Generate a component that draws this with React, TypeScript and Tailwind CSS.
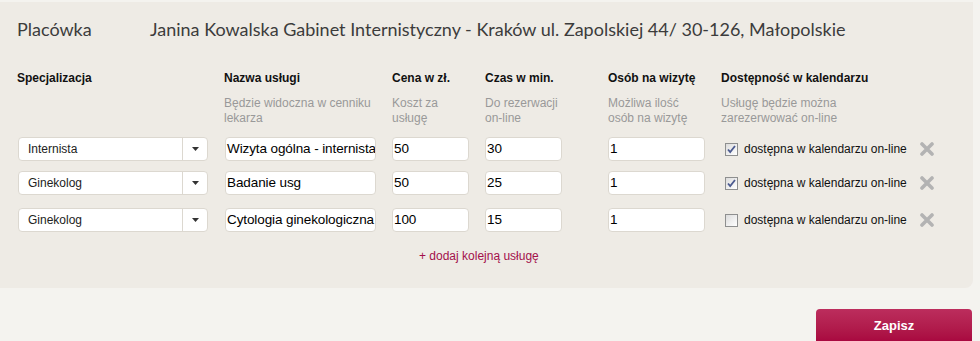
import React from "react";

type Row = {
  spec: string;
  name: string;
  price: string;
  time: string;
  people: string;
  online: boolean;
};

const rows: Row[] = [
  { spec: "Internista", name: "Wizyta ogólna - internista", price: "50", time: "30", people: "1", online: true },
  { spec: "Ginekolog", name: "Badanie usg", price: "50", time: "25", people: "1", online: true },
  { spec: "Ginekolog", name: "Cytologia ginekologiczna", price: "100", time: "15", people: "1", online: false },
];

const Field: React.FC<{ value: string; w: string }> = ({ value, w }) => (
  <div
    className={`${w} h-[24px] rounded-[4px] bg-white border border-[#dcd8d0] pl-[1px] flex items-center overflow-hidden whitespace-nowrap text-[13.5px] tracking-[-0.1px] text-black`}
  >
    {value}
  </div>
);

const Select: React.FC<{ value: string }> = ({ value }) => (
  <div className="w-[190px] h-[24px] rounded-[4px] bg-white border border-[#dcd8d0] flex items-stretch text-[12px] text-[#222]">
    <div className="flex-1 flex items-center pl-[9px]">{value}</div>
    <div className="w-[25px] border-l border-[#dcd8d0] flex items-center justify-center">
      <svg width="7" height="4" viewBox="0 0 7 4">
        <path d="M0 0h7L3.5 4z" fill="#333" />
      </svg>
    </div>
  </div>
);

const Check: React.FC<{ on: boolean }> = ({ on }) => (
  <div className="w-[13px] h-[13px] border border-[#8e8f8f] bg-gradient-to-br from-[#dcdcdc] to-white flex items-center justify-center">
    {on && (
      <svg width="9" height="9" viewBox="0 0 9 9">
        <path d="M1 4.5l2.2 2.6L8 1" fill="none" stroke="#4b5a8f" strokeWidth="1.8" />
      </svg>
    )}
  </div>
);

const Remove = () => (
  <svg width="14" height="14" viewBox="0 0 14 14">
    <path d="M2 2l10 10M12 2L2 12" stroke="#b3b3b3" strokeWidth="3.6" strokeLinecap="round" />
  </svg>
);

const head = [
  { t: "Specjalizacja", w: "w-[207px]", sub: [] as string[] },
  { t: "Nazwa usługi", w: "w-[168px]", sub: ["Będzie widoczna w cenniku", "lekarza"] },
  { t: "Cena w zł.", w: "w-[93px]", sub: ["Koszt za", "usługę"] },
  { t: "Czas w min.", w: "w-[123px]", sub: ["Do rezerwacji", "on-line"] },
  { t: "Osób na wizytę", w: "w-[113px]", sub: ["Możliwa ilość", "osób na wizytę"] },
  { t: "Dostępność w kalendarzu", w: "w-[200px]", sub: ["Usługę będzie można", "zarezerwować on-line"] },
];

export default function App() {
  return (
    <div className="w-[980px] h-[341px] bg-[#f4f3ef] pt-[2px] overflow-hidden font-['Liberation_Sans',Arial,sans-serif]">
      <div className="w-[973px] h-[286px] bg-[#eeebe5] rounded-br-[8px]">
        {/* nagłówek placówki */}
        <div className="flex items-center h-[54px] pl-[17px] font-['Lato',sans-serif] text-[18px] text-[#3c3c3c]">
          <div className="w-[133px]">Placówka</div>
          <div>Janina Kowalska Gabinet Internistyczny - Kraków ul. Zapolskiej 44/ 30-126, Małopolskie</div>
        </div>

        {/* kolumny */}
        <div className="flex pl-[17px] pt-[15px]">
          {head.map((h) => (
            <div key={h.t} className={h.w}>
              <div className="text-[12px] font-bold text-[#111] leading-[14px]">{h.t}</div>
              <div className="mt-[11px] text-[12px] text-[#999] leading-[15px]">
                {h.sub.map((s) => (
                  <div key={s}>{s}</div>
                ))}
              </div>
            </div>
          ))}
        </div>

        {/* usługi */}
        <div className="pl-[18px] pt-[11px] flex flex-col">
          {rows.map((r, i) => (
            <div key={i} className={`flex items-center ${i === 1 ? "mt-[10px]" : i === 2 ? "mt-[13px]" : ""}`}>
              <Select value={r.spec} />
              <div className="w-[17px]" />
              <Field value={r.name} w="w-[151px]" />
              <div className="w-[16px]" />
              <Field value={r.price} w="w-[77px]" />
              <div className="w-[16px]" />
              <Field value={r.time} w="w-[77px]" />
              <div className="w-[46px]" />
              <Field value={r.people} w="w-[97px]" />
              <div className="flex items-center ml-[20px] gap-[6px] text-[12px] text-[#111]">
                <Check on={r.online} />
                <span>dostępna w kalendarzu on-line</span>
                <span className="ml-[7px] flex">
                  <Remove />
                </span>
              </div>
            </div>
          ))}
        </div>

        <div className="pl-[419px] pt-[15px] text-[12px] text-[#a3104b]">+ dodaj kolejną usługę</div>
      </div>

      <div className="flex justify-end pr-[8px] pt-[21px]">
        <button className="w-[156px] h-[33px] rounded-t-[4px] bg-gradient-to-b from-[#bc2d5d] to-[#a8063f] text-white text-[13px] font-bold">
          Zapisz
        </button>
      </div>
    </div>
  );
}
